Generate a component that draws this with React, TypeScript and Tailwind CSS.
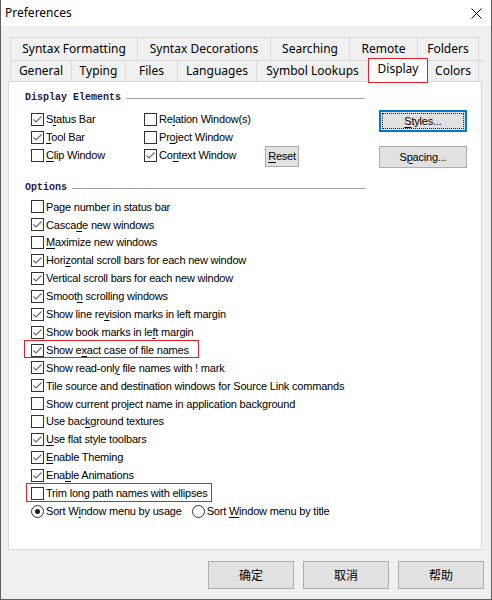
import type { ReactNode } from 'react'

interface Opt {
  label: string
  checked: boolean
  mark?: 'exact' | 'trim'
}

const displayLeft: Opt[] = [
  { label: 'S&tatus Bar', checked: true },
  { label: '&Tool Bar', checked: true },
  { label: '&Clip Window', checked: false },
]

const displayRight: Opt[] = [
  { label: 'Re&lation Window(s)', checked: false },
  { label: 'Pr&oject Window', checked: false },
  { label: 'Co&ntext Window', checked: true },
]

const options: Opt[] = [
  { label: 'Page number in status bar', checked: false },
  { label: 'Casca&de new windows', checked: true },
  { label: '&Maximize new windows', checked: false },
  { label: 'Hori&zontal scroll bars for each new window', checked: true },
  { label: 'Vertical scroll bars for each new window', checked: true },
  { label: 'Smoot&h scrolling windows', checked: true },
  { label: 'Show line re&vision marks in left margin', checked: true },
  { label: 'Show book marks in le&ft margin', checked: true },
  { label: 'Show e&xact case of file names', checked: true, mark: 'exact' },
  { label: 'Show read-onl&y file names with ! mark', checked: true },
  { label: 'Tile source and destination windows for Source Link commands', checked: true },
  { label: 'Show current project name in application background', checked: false },
  { label: 'Use bac&kground textures', checked: false },
  { label: '&Use flat style toolbars', checked: true },
  { label: '&Enable Theming', checked: true },
  { label: 'Ena&ble Animations', checked: true },
  { label: 'Trim long path names with ellipses', checked: false, mark: 'trim' },
]

const tabsTop = [
  { name: 'Syntax Formatting', w: 'w-[127px]' },
  { name: 'Syntax Decorations', w: 'w-[133px]' },
  { name: 'Searching', w: 'w-[79px]' },
  { name: 'Remote', w: 'w-[68px]' },
  { name: 'Folders', w: 'w-[62px]' },
]

const tabsBottom = [
  { name: 'General', w: 'w-[61px]' },
  { name: 'Typing', w: 'w-[54px]' },
  { name: 'Files', w: 'w-[52px]' },
  { name: 'Languages', w: 'w-[79px]' },
  { name: 'Symbol Lookups', w: 'w-[112px]' },
  { name: 'Display', w: 'w-[60px]' },
  { name: 'Colors', w: 'w-[51px]' },
]

// "&x" underlines the accelerator letter, like a Win32 label
function Mnemonic({ text }: { text: string }) {
  const i = text.indexOf('&')
  if (i < 0) return <>{text}</>
  return (
    <>
      {text.slice(0, i)}
      <u className="underline-offset-[2px]">{text[i + 1]}</u>
      {text.slice(i + 2)}
    </>
  )
}

function Box({ checked }: { checked: boolean }) {
  return (
    <span className="w-[13px] h-[13px] border border-[#333333] bg-white flex items-center justify-center shrink-0">
      {checked && (
        <svg width="11" height="11" viewBox="0 0 11 11">
          <polyline points="1.5,5.5 4,8 9.5,2.5" fill="none" stroke="#6b6b6b" strokeWidth="1.2" />
        </svg>
      )}
    </span>
  )
}

function Check({ opt, className = '' }: { opt: Opt; className?: string }) {
  return (
    <div className={`flex items-center h-[18px] ${className}`}>
      <Box checked={opt.checked} />
      <span className="ml-[2px] whitespace-nowrap text-black">
        <Mnemonic text={opt.label} />
      </span>
    </div>
  )
}

function Radio({ on, label }: { on: boolean; label: string }) {
  return (
    <div className="flex items-center">
      <span className="w-[13px] h-[13px] rounded-full border border-[#333333] bg-white flex items-center justify-center shrink-0">
        {on && <span className="w-[5px] h-[5px] rounded-full bg-[#1a1a1a]" />}
      </span>
      <span className="ml-[2px] whitespace-nowrap">
        <Mnemonic text={label} />
      </span>
    </div>
  )
}

function GroupHeader({ title }: { title: string }) {
  return (
    <div className="flex items-center h-[12px] w-[340px]">
      <span className="font-['Liberation_Mono',monospace] text-[10px] tracking-normal font-bold text-[#1c1c48] leading-none">
        {title}
      </span>
      <span className="flex-1 h-px bg-[#a0a0a0] ml-[5px]" />
    </div>
  )
}

function PushButton({ children, className = '' }: { children: ReactNode; className?: string }) {
  return (
    <div
      className={`bg-[#e1e1e1] border border-[#adadad] flex items-center justify-center text-black ${className}`}
    >
      {children}
    </div>
  )
}

export default function App() {
  return (
    <div className="w-[492px] h-[600px] bg-[#f0f0f0] border-x border-b border-[#5f5f5f] flex flex-col overflow-hidden font-['Noto_Sans',sans-serif]">
      {/* title bar */}
      <div className="h-[26px] bg-white flex items-center justify-between pl-[4px] pr-[9px] shrink-0">
        <span className="text-[12px] text-black">Preferences</span>
        <svg width="11" height="11" viewBox="0 0 11 11">
          <path d="M0.5 0.5 L10.5 10.5 M10.5 0.5 L0.5 10.5" stroke="#111" strokeWidth="1" />
        </svg>
      </div>

      <div className="flex-1 flex flex-col pl-[7px] pr-[7px]">
        {/* tabs */}
        <div className="ml-[2px] mt-[11px] text-[12px] text-black">
          <div className="flex h-[23px]">
            {tabsTop.map((t, i) => (
              <div
                key={t.name}
                className={`${t.w} border-t border-l border-[#d9d9d9] ${i === tabsTop.length - 1 ? 'border-r' : ''} flex items-center justify-center`}
              >
                {t.name}
              </div>
            ))}
          </div>
          <div className="flex h-[21px] border-t border-[#d9d9d9]">
            {tabsBottom.map((t, i) => {
              const active = t.name === 'Display'
              if (active) {
                return (
                  <div
                    key={t.name}
                    className={`${t.w} relative z-10 -mt-[3px] h-[25px] bg-white border border-[#ec1c24] flex items-start justify-center pt-[1px]`}
                  >
                    {t.name}
                  </div>
                )
              }
              return (
                <div
                  key={t.name}
                  className={`${t.w} border-l border-[#d9d9d9] ${i === tabsBottom.length - 1 ? 'border-r' : ''} ${tabsBottom[i - 1]?.name === 'Display' ? 'border-l-0' : ''} flex items-center justify-center`}
                >
                  {t.name}
                </div>
              )
            })}
          </div>
        </div>

        {/* tab page */}
        <div className="w-[474px] h-[469px] bg-white border border-[#d9d9d9] pl-[16px] pt-[10px] font-['Liberation_Sans',sans-serif] text-[11px] tracking-[-0.2px] text-black">
          <div className="flex">
            <div className="w-[340px]">
              <GroupHeader title="Display Elements" />
              <div className="flex mt-[6px] pl-[6px]">
                <div className="w-[113px]">
                  {displayLeft.map(o => (
                    <Check key={o.label} opt={o} />
                  ))}
                </div>
                <div className="w-[121px]">
                  {displayRight.map(o => (
                    <Check key={o.label} opt={o} />
                  ))}
                </div>
                <div className="flex flex-col justify-end">
                  <PushButton className="w-[34px] h-[21px] mb-[-3px]">
                    <Mnemonic text="&Reset" />
                  </PushButton>
                </div>
              </div>
            </div>
            <div className="ml-[14px] mt-[18px] flex flex-col gap-[14px]">
              <div className="relative w-[88px] h-[22px] bg-[#e1e1e1] border-2 border-[#0078d7] flex items-center justify-center">
                <span className="absolute inset-[1px] border border-dotted border-[#222]" />
                <Mnemonic text="&Styles..." />
              </div>
              <PushButton className="w-[88px] h-[22px]">
                <Mnemonic text="S&pacing..." />
              </PushButton>
            </div>
          </div>

          <div className="mt-[14px]">
            <GroupHeader title="Options" />
          </div>
          <div className="mt-[4px] pl-[6px]">
            {options.map(o => (
              <div key={o.label} className="relative h-[17.9px] flex items-center">
                <Check opt={o} className="h-[17.9px]" />
                {o.mark === 'exact' && (
                  <span className="absolute -left-[7px] -top-[1px] w-[175px] h-[18px] border border-[#ec1c24]" />
                )}
                {o.mark === 'trim' && (
                  <span className="absolute -left-[5px] -top-[1px] w-[186px] h-[19px] border border-[#ec1c24]" />
                )}
              </div>
            ))}
            <div className="h-[17.9px] flex items-center">
              <Radio on label="Sort W&indow menu by usage" />
              <div className="ml-[10px]">
                <Radio on={false} label="Sort &Window menu by title" />
              </div>
            </div>
          </div>
        </div>

        {/* dialog buttons */}
        <div className="flex justify-end gap-[9px] mt-[11px] font-['Noto_Sans_CJK_SC',sans-serif] text-[12px]">
          <PushButton className="w-[86px] h-[28px]">确定</PushButton>
          <PushButton className="w-[86px] h-[28px]">取消</PushButton>
          <PushButton className="w-[86px] h-[28px]">帮助</PushButton>
        </div>
      </div>
    </div>
  )
}
